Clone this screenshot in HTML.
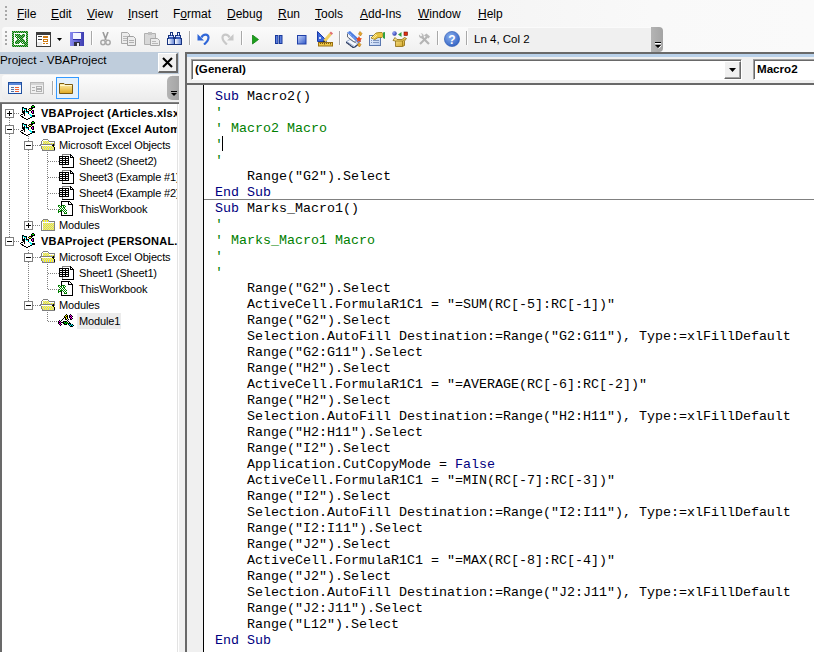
<!DOCTYPE html>
<html><head><meta charset="utf-8"><style>
*{margin:0;padding:0;box-sizing:border-box}
html,body{width:814px;height:652px;overflow:hidden;background:#f7f7f7;font-family:"Liberation Sans",sans-serif;position:relative}
.abs{position:absolute}
.mi{position:absolute;top:7px;font-size:12px;color:#000;line-height:14px;white-space:nowrap}
.mi u{text-decoration:underline;text-underline-offset:1px}
.sep{position:absolute;width:1px;height:14px;top:31px;background:#a8a8a8;box-shadow:1px 0 0 #fff}
.ico{position:absolute}
.tr{position:absolute;font-size:11px;white-space:nowrap;line-height:13px;color:#000;letter-spacing:-0.15px}
.tb{font-weight:bold;letter-spacing:0.25px}
.box{position:absolute;width:9px;height:9px;border:1px solid #808080;background:#fff}
.box:before{content:"";position:absolute;left:1px;top:3px;width:5px;height:1px;background:#000}
.box.plus:after{content:"";position:absolute;left:3px;top:1px;width:1px;height:5px;background:#000}
.dv{position:absolute;width:1px;background-image:linear-gradient(#808080 50%,transparent 50%);background-size:1px 2px}
.dh{position:absolute;height:1px;background-image:linear-gradient(90deg,#808080 50%,transparent 50%);background-size:2px 1px}
.combo{position:absolute;height:21px;background:#fff;border-top:1px solid #a0a0a0;border-left:1px solid #a0a0a0;border-bottom:1px solid #fff;border-right:1px solid #fff;box-shadow:inset 1px 1px 0 #696969}
.combo span{position:absolute;left:3px;top:2px;font-size:11.6px;font-weight:bold;white-space:nowrap;line-height:13px}
#lines{left:215px;top:89px;font-family:"Liberation Mono",monospace;font-size:13.333px;line-height:16px;white-space:pre;color:#000}
.k{color:#000080}
.c{color:#008000}
</style></head><body>
<svg width="0" height="0" style="position:absolute"><symbol id="i-proj" viewBox="0 0 16 16" shape-rendering="crispEdges"><rect x="12" y="0" width="2" height="1" fill="#000"/><rect x="11" y="1" width="1" height="1" fill="#000"/><rect x="12" y="1" width="2" height="1" fill="#00ff00"/><rect x="14" y="1" width="1" height="1" fill="#000"/><rect x="2" y="2" width="2" height="1" fill="#000"/><rect x="11" y="2" width="4" height="1" fill="#000"/><rect x="2" y="3" width="1" height="1" fill="#000"/><rect x="3" y="3" width="1" height="1" fill="#00ffff"/><rect x="4" y="3" width="3" height="1" fill="#000"/><rect x="9" y="3" width="4" height="1" fill="#000"/><rect x="2" y="4" width="1" height="1" fill="#000"/><rect x="3" y="4" width="1" height="1" fill="#fff"/><rect x="4" y="4" width="2" height="1" fill="#00ffff"/><rect x="6" y="4" width="1" height="1" fill="#000"/><rect x="8" y="4" width="1" height="1" fill="#000"/><rect x="9" y="4" width="2" height="1" fill="#ffff00"/><rect x="11" y="4" width="1" height="1" fill="#000"/><rect x="2" y="5" width="1" height="1" fill="#000"/><rect x="3" y="5" width="1" height="1" fill="#fff"/><rect x="4" y="5" width="1" height="1" fill="#000"/><rect x="5" y="5" width="1" height="1" fill="#fff"/><rect x="6" y="5" width="1" height="1" fill="#000"/><rect x="9" y="5" width="2" height="1" fill="#000"/><rect x="12" y="5" width="2" height="1" fill="#000"/><rect x="2" y="6" width="3" height="1" fill="#000"/><rect x="5" y="6" width="1" height="1" fill="#00ffff"/><rect x="6" y="6" width="3" height="1" fill="#000"/><rect x="11" y="6" width="1" height="1" fill="#000"/><rect x="12" y="6" width="1" height="1" fill="#ff00ff"/><rect x="13" y="6" width="1" height="1" fill="#000"/><rect x="2" y="7" width="3" height="1" fill="#000"/><rect x="5" y="7" width="1" height="1" fill="#fff"/><rect x="6" y="7" width="2" height="1" fill="#00ffff"/><rect x="8" y="7" width="1" height="1" fill="#000"/><rect x="11" y="7" width="1" height="1" fill="#000"/><rect x="12" y="7" width="1" height="1" fill="#ff00ff"/><rect x="13" y="7" width="1" height="1" fill="#000"/><rect x="3" y="8" width="2" height="1" fill="#000"/><rect x="5" y="8" width="3" height="1" fill="#fff"/><rect x="8" y="8" width="1" height="1" fill="#000"/><rect x="12" y="8" width="2" height="1" fill="#000"/><rect x="1" y="9" width="2" height="1" fill="#000"/><rect x="4" y="9" width="1" height="1" fill="#000"/><rect x="5" y="9" width="4" height="1" fill="#fff"/><rect x="9" y="9" width="2" height="1" fill="#00ffff"/><rect x="0" y="10" width="1" height="1" fill="#000"/><rect x="1" y="10" width="3" height="1" fill="#fff"/><rect x="4" y="10" width="1" height="1" fill="#000"/><rect x="5" y="10" width="5" height="1" fill="#fff"/><rect x="10" y="10" width="2" height="1" fill="#00ffff"/><rect x="12" y="10" width="3" height="1" fill="#000"/><rect x="1" y="11" width="2" height="1" fill="#000"/><rect x="3" y="11" width="8" height="1" fill="#fff"/><rect x="11" y="11" width="1" height="1" fill="#00ffff"/><rect x="12" y="11" width="3" height="1" fill="#000"/><rect x="2" y="12" width="2" height="1" fill="#000"/><rect x="4" y="12" width="6" height="1" fill="#fff"/><rect x="10" y="12" width="2" height="1" fill="#000"/><rect x="4" y="13" width="2" height="1" fill="#000"/><rect x="6" y="13" width="2" height="1" fill="#fff"/><rect x="8" y="13" width="2" height="1" fill="#000"/><rect x="6" y="14" width="2" height="1" fill="#000"/></symbol><symbol id="i-fopen" viewBox="0 0 16 16" shape-rendering="crispEdges"><rect x="3" y="2" width="5" height="1" fill="#808080"/><rect x="2" y="3" width="1" height="1" fill="#808080"/><rect x="3" y="3" width="5" height="1" fill="#fff"/><rect x="8" y="3" width="1" height="1" fill="#808080"/><rect x="1" y="4" width="1" height="1" fill="#808080"/><rect x="2" y="4" width="1" height="1" fill="#fff"/><rect x="3" y="4" width="1" height="1" fill="#ffff00"/><rect x="4" y="4" width="1" height="1" fill="#c8c8d8"/><rect x="5" y="4" width="1" height="1" fill="#ffff00"/><rect x="6" y="4" width="1" height="1" fill="#c8c8d8"/><rect x="7" y="4" width="1" height="1" fill="#ffff00"/><rect x="8" y="4" width="1" height="1" fill="#c8c8d8"/><rect x="9" y="4" width="6" height="1" fill="#808080"/><rect x="1" y="5" width="1" height="1" fill="#808080"/><rect x="2" y="5" width="1" height="1" fill="#fff"/><rect x="3" y="5" width="1" height="1" fill="#c8c8d8"/><rect x="4" y="5" width="1" height="1" fill="#ffff00"/><rect x="5" y="5" width="1" height="1" fill="#c8c8d8"/><rect x="6" y="5" width="1" height="1" fill="#ffff00"/><rect x="7" y="5" width="1" height="1" fill="#c8c8d8"/><rect x="8" y="5" width="1" height="1" fill="#ffff00"/><rect x="9" y="5" width="5" height="1" fill="#fff"/><rect x="14" y="5" width="1" height="1" fill="#808080"/><rect x="1" y="6" width="1" height="1" fill="#808080"/><rect x="2" y="6" width="1" height="1" fill="#fff"/><rect x="3" y="6" width="1" height="1" fill="#ffff00"/><rect x="4" y="6" width="1" height="1" fill="#c8c8d8"/><rect x="5" y="6" width="1" height="1" fill="#ffff00"/><rect x="6" y="6" width="1" height="1" fill="#c8c8d8"/><rect x="7" y="6" width="1" height="1" fill="#ffff00"/><rect x="8" y="6" width="1" height="1" fill="#c8c8d8"/><rect x="9" y="6" width="1" height="1" fill="#ffff00"/><rect x="10" y="6" width="1" height="1" fill="#c8c8d8"/><rect x="11" y="6" width="1" height="1" fill="#ffff00"/><rect x="12" y="6" width="1" height="1" fill="#c8c8d8"/><rect x="13" y="6" width="1" height="1" fill="#ffff00"/><rect x="14" y="6" width="1" height="1" fill="#808080"/><rect x="0" y="7" width="13" height="1" fill="#808080"/><rect x="13" y="7" width="1" height="1" fill="#000"/><rect x="14" y="7" width="1" height="1" fill="#808080"/><rect x="0" y="8" width="1" height="1" fill="#808080"/><rect x="1" y="8" width="11" height="1" fill="#fff"/><rect x="12" y="8" width="2" height="1" fill="#000"/><rect x="14" y="8" width="1" height="1" fill="#808080"/><rect x="1" y="9" width="1" height="1" fill="#808080"/><rect x="2" y="9" width="1" height="1" fill="#ffff00"/><rect x="3" y="9" width="1" height="1" fill="#c8c8d8"/><rect x="4" y="9" width="1" height="1" fill="#ffff00"/><rect x="5" y="9" width="1" height="1" fill="#c8c8d8"/><rect x="6" y="9" width="1" height="1" fill="#ffff00"/><rect x="7" y="9" width="1" height="1" fill="#c8c8d8"/><rect x="8" y="9" width="1" height="1" fill="#ffff00"/><rect x="9" y="9" width="1" height="1" fill="#c8c8d8"/><rect x="10" y="9" width="1" height="1" fill="#ffff00"/><rect x="11" y="9" width="1" height="1" fill="#c8c8d8"/><rect x="12" y="9" width="1" height="1" fill="#ffff00"/><rect x="13" y="9" width="1" height="1" fill="#000"/><rect x="1" y="10" width="1" height="1" fill="#808080"/><rect x="2" y="10" width="1" height="1" fill="#c8c8d8"/><rect x="3" y="10" width="1" height="1" fill="#ffff00"/><rect x="4" y="10" width="1" height="1" fill="#c8c8d8"/><rect x="5" y="10" width="1" height="1" fill="#ffff00"/><rect x="6" y="10" width="1" height="1" fill="#c8c8d8"/><rect x="7" y="10" width="1" height="1" fill="#ffff00"/><rect x="8" y="10" width="1" height="1" fill="#c8c8d8"/><rect x="9" y="10" width="1" height="1" fill="#ffff00"/><rect x="10" y="10" width="1" height="1" fill="#c8c8d8"/><rect x="11" y="10" width="1" height="1" fill="#ffff00"/><rect x="12" y="10" width="1" height="1" fill="#c8c8d8"/><rect x="13" y="10" width="1" height="1" fill="#ffff00"/><rect x="14" y="10" width="1" height="1" fill="#000"/><rect x="1" y="11" width="1" height="1" fill="#808080"/><rect x="2" y="11" width="1" height="1" fill="#ffff00"/><rect x="3" y="11" width="1" height="1" fill="#c8c8d8"/><rect x="4" y="11" width="1" height="1" fill="#ffff00"/><rect x="5" y="11" width="1" height="1" fill="#c8c8d8"/><rect x="6" y="11" width="1" height="1" fill="#ffff00"/><rect x="7" y="11" width="1" height="1" fill="#c8c8d8"/><rect x="8" y="11" width="1" height="1" fill="#ffff00"/><rect x="9" y="11" width="1" height="1" fill="#c8c8d8"/><rect x="10" y="11" width="1" height="1" fill="#ffff00"/><rect x="11" y="11" width="1" height="1" fill="#c8c8d8"/><rect x="12" y="11" width="1" height="1" fill="#ffff00"/><rect x="13" y="11" width="1" height="1" fill="#c8c8d8"/><rect x="14" y="11" width="1" height="1" fill="#000"/><rect x="2" y="12" width="1" height="1" fill="#808080"/><rect x="3" y="12" width="1" height="1" fill="#c8c8d8"/><rect x="4" y="12" width="1" height="1" fill="#ffff00"/><rect x="5" y="12" width="1" height="1" fill="#c8c8d8"/><rect x="6" y="12" width="1" height="1" fill="#ffff00"/><rect x="7" y="12" width="1" height="1" fill="#c8c8d8"/><rect x="8" y="12" width="1" height="1" fill="#ffff00"/><rect x="9" y="12" width="1" height="1" fill="#c8c8d8"/><rect x="10" y="12" width="1" height="1" fill="#ffff00"/><rect x="11" y="12" width="1" height="1" fill="#c8c8d8"/><rect x="12" y="12" width="1" height="1" fill="#ffff00"/><rect x="13" y="12" width="1" height="1" fill="#c8c8d8"/><rect x="14" y="12" width="1" height="1" fill="#000"/><rect x="2" y="13" width="13" height="1" fill="#808080"/></symbol><symbol id="i-fclosed" viewBox="0 0 16 16" shape-rendering="crispEdges"><rect x="3" y="2" width="5" height="1" fill="#808080"/><rect x="2" y="3" width="1" height="1" fill="#808080"/><rect x="3" y="3" width="1" height="1" fill="#ffff00"/><rect x="4" y="3" width="1" height="1" fill="#c8c8d8"/><rect x="5" y="3" width="1" height="1" fill="#ffff00"/><rect x="6" y="3" width="1" height="1" fill="#c8c8d8"/><rect x="7" y="3" width="1" height="1" fill="#ffff00"/><rect x="8" y="3" width="1" height="1" fill="#808080"/><rect x="1" y="4" width="1" height="1" fill="#808080"/><rect x="2" y="4" width="1" height="1" fill="#c8c8d8"/><rect x="3" y="4" width="1" height="1" fill="#ffff00"/><rect x="4" y="4" width="1" height="1" fill="#c8c8d8"/><rect x="5" y="4" width="1" height="1" fill="#ffff00"/><rect x="6" y="4" width="1" height="1" fill="#c8c8d8"/><rect x="7" y="4" width="1" height="1" fill="#ffff00"/><rect x="8" y="4" width="1" height="1" fill="#c8c8d8"/><rect x="9" y="4" width="6" height="1" fill="#808080"/><rect x="1" y="5" width="1" height="1" fill="#808080"/><rect x="2" y="5" width="12" height="1" fill="#fff"/><rect x="14" y="5" width="1" height="1" fill="#808080"/><rect x="1" y="6" width="1" height="1" fill="#808080"/><rect x="2" y="6" width="1" height="1" fill="#fff"/><rect x="3" y="6" width="1" height="1" fill="#ffff00"/><rect x="4" y="6" width="1" height="1" fill="#c8c8d8"/><rect x="5" y="6" width="1" height="1" fill="#ffff00"/><rect x="6" y="6" width="1" height="1" fill="#c8c8d8"/><rect x="7" y="6" width="1" height="1" fill="#ffff00"/><rect x="8" y="6" width="1" height="1" fill="#c8c8d8"/><rect x="9" y="6" width="1" height="1" fill="#ffff00"/><rect x="10" y="6" width="1" height="1" fill="#c8c8d8"/><rect x="11" y="6" width="1" height="1" fill="#ffff00"/><rect x="12" y="6" width="1" height="1" fill="#c8c8d8"/><rect x="13" y="6" width="1" height="1" fill="#ffff00"/><rect x="14" y="6" width="1" height="1" fill="#808080"/><rect x="1" y="7" width="1" height="1" fill="#808080"/><rect x="2" y="7" width="1" height="1" fill="#fff"/><rect x="3" y="7" width="1" height="1" fill="#c8c8d8"/><rect x="4" y="7" width="1" height="1" fill="#ffff00"/><rect x="5" y="7" width="1" height="1" fill="#c8c8d8"/><rect x="6" y="7" width="1" height="1" fill="#ffff00"/><rect x="7" y="7" width="1" height="1" fill="#c8c8d8"/><rect x="8" y="7" width="1" height="1" fill="#ffff00"/><rect x="9" y="7" width="1" height="1" fill="#c8c8d8"/><rect x="10" y="7" width="1" height="1" fill="#ffff00"/><rect x="11" y="7" width="1" height="1" fill="#c8c8d8"/><rect x="12" y="7" width="1" height="1" fill="#ffff00"/><rect x="13" y="7" width="1" height="1" fill="#c8c8d8"/><rect x="14" y="7" width="1" height="1" fill="#808080"/><rect x="1" y="8" width="1" height="1" fill="#808080"/><rect x="2" y="8" width="1" height="1" fill="#fff"/><rect x="3" y="8" width="1" height="1" fill="#ffff00"/><rect x="4" y="8" width="1" height="1" fill="#c8c8d8"/><rect x="5" y="8" width="1" height="1" fill="#ffff00"/><rect x="6" y="8" width="1" height="1" fill="#c8c8d8"/><rect x="7" y="8" width="1" height="1" fill="#ffff00"/><rect x="8" y="8" width="1" height="1" fill="#c8c8d8"/><rect x="9" y="8" width="1" height="1" fill="#ffff00"/><rect x="10" y="8" width="1" height="1" fill="#c8c8d8"/><rect x="11" y="8" width="1" height="1" fill="#ffff00"/><rect x="12" y="8" width="1" height="1" fill="#c8c8d8"/><rect x="13" y="8" width="1" height="1" fill="#ffff00"/><rect x="14" y="8" width="1" height="1" fill="#808080"/><rect x="1" y="9" width="1" height="1" fill="#808080"/><rect x="2" y="9" width="1" height="1" fill="#fff"/><rect x="3" y="9" width="1" height="1" fill="#c8c8d8"/><rect x="4" y="9" width="1" height="1" fill="#ffff00"/><rect x="5" y="9" width="1" height="1" fill="#c8c8d8"/><rect x="6" y="9" width="1" height="1" fill="#ffff00"/><rect x="7" y="9" width="1" height="1" fill="#c8c8d8"/><rect x="8" y="9" width="1" height="1" fill="#ffff00"/><rect x="9" y="9" width="1" height="1" fill="#c8c8d8"/><rect x="10" y="9" width="1" height="1" fill="#ffff00"/><rect x="11" y="9" width="1" height="1" fill="#c8c8d8"/><rect x="12" y="9" width="1" height="1" fill="#ffff00"/><rect x="13" y="9" width="1" height="1" fill="#c8c8d8"/><rect x="14" y="9" width="1" height="1" fill="#808080"/><rect x="1" y="10" width="1" height="1" fill="#808080"/><rect x="2" y="10" width="1" height="1" fill="#fff"/><rect x="3" y="10" width="1" height="1" fill="#ffff00"/><rect x="4" y="10" width="1" height="1" fill="#c8c8d8"/><rect x="5" y="10" width="1" height="1" fill="#ffff00"/><rect x="6" y="10" width="1" height="1" fill="#c8c8d8"/><rect x="7" y="10" width="1" height="1" fill="#ffff00"/><rect x="8" y="10" width="1" height="1" fill="#c8c8d8"/><rect x="9" y="10" width="1" height="1" fill="#ffff00"/><rect x="10" y="10" width="1" height="1" fill="#c8c8d8"/><rect x="11" y="10" width="1" height="1" fill="#ffff00"/><rect x="12" y="10" width="1" height="1" fill="#c8c8d8"/><rect x="13" y="10" width="1" height="1" fill="#ffff00"/><rect x="14" y="10" width="1" height="1" fill="#808080"/><rect x="1" y="11" width="1" height="1" fill="#808080"/><rect x="2" y="11" width="1" height="1" fill="#fff"/><rect x="3" y="11" width="1" height="1" fill="#c8c8d8"/><rect x="4" y="11" width="1" height="1" fill="#ffff00"/><rect x="5" y="11" width="1" height="1" fill="#c8c8d8"/><rect x="6" y="11" width="1" height="1" fill="#ffff00"/><rect x="7" y="11" width="1" height="1" fill="#c8c8d8"/><rect x="8" y="11" width="1" height="1" fill="#ffff00"/><rect x="9" y="11" width="1" height="1" fill="#c8c8d8"/><rect x="10" y="11" width="1" height="1" fill="#ffff00"/><rect x="11" y="11" width="1" height="1" fill="#c8c8d8"/><rect x="12" y="11" width="1" height="1" fill="#ffff00"/><rect x="13" y="11" width="1" height="1" fill="#c8c8d8"/><rect x="14" y="11" width="1" height="1" fill="#808080"/><rect x="1" y="12" width="1" height="1" fill="#808080"/><rect x="2" y="12" width="1" height="1" fill="#fff"/><rect x="3" y="12" width="1" height="1" fill="#ffff00"/><rect x="4" y="12" width="1" height="1" fill="#c8c8d8"/><rect x="5" y="12" width="1" height="1" fill="#ffff00"/><rect x="6" y="12" width="1" height="1" fill="#c8c8d8"/><rect x="7" y="12" width="1" height="1" fill="#ffff00"/><rect x="8" y="12" width="1" height="1" fill="#c8c8d8"/><rect x="9" y="12" width="1" height="1" fill="#ffff00"/><rect x="10" y="12" width="1" height="1" fill="#c8c8d8"/><rect x="11" y="12" width="1" height="1" fill="#ffff00"/><rect x="12" y="12" width="1" height="1" fill="#c8c8d8"/><rect x="13" y="12" width="1" height="1" fill="#ffff00"/><rect x="14" y="12" width="1" height="1" fill="#808080"/><rect x="1" y="13" width="14" height="1" fill="#808080"/></symbol><symbol id="i-sheet" viewBox="0 0 16 16" shape-rendering="crispEdges"><rect x="3" y="1" width="8" height="1" fill="#808080"/><rect x="11" y="1" width="1" height="1" fill="#000"/><rect x="3" y="2" width="1" height="1" fill="#808080"/><rect x="4" y="2" width="7" height="1" fill="#fff"/><rect x="11" y="2" width="2" height="1" fill="#000"/><rect x="0" y="3" width="10" height="1" fill="#000"/><rect x="10" y="3" width="1" height="1" fill="#fff"/><rect x="11" y="3" width="1" height="1" fill="#000"/><rect x="12" y="3" width="1" height="1" fill="#fff"/><rect x="13" y="3" width="1" height="1" fill="#000"/><rect x="0" y="4" width="1" height="1" fill="#000"/><rect x="1" y="4" width="2" height="1" fill="#fff"/><rect x="3" y="4" width="1" height="1" fill="#000"/><rect x="4" y="4" width="2" height="1" fill="#fff"/><rect x="6" y="4" width="1" height="1" fill="#000"/><rect x="7" y="4" width="2" height="1" fill="#fff"/><rect x="9" y="4" width="1" height="1" fill="#000"/><rect x="10" y="4" width="1" height="1" fill="#fff"/><rect x="11" y="4" width="4" height="1" fill="#000"/><rect x="0" y="5" width="10" height="1" fill="#000"/><rect x="10" y="5" width="4" height="1" fill="#fff"/><rect x="14" y="5" width="1" height="1" fill="#000"/><rect x="0" y="6" width="1" height="1" fill="#000"/><rect x="1" y="6" width="2" height="1" fill="#fff"/><rect x="3" y="6" width="1" height="1" fill="#000"/><rect x="4" y="6" width="2" height="1" fill="#fff"/><rect x="6" y="6" width="1" height="1" fill="#000"/><rect x="7" y="6" width="2" height="1" fill="#fff"/><rect x="9" y="6" width="1" height="1" fill="#000"/><rect x="10" y="6" width="4" height="1" fill="#fff"/><rect x="14" y="6" width="1" height="1" fill="#000"/><rect x="0" y="7" width="10" height="1" fill="#000"/><rect x="10" y="7" width="4" height="1" fill="#fff"/><rect x="14" y="7" width="1" height="1" fill="#000"/><rect x="0" y="8" width="1" height="1" fill="#000"/><rect x="1" y="8" width="2" height="1" fill="#fff"/><rect x="3" y="8" width="1" height="1" fill="#000"/><rect x="4" y="8" width="2" height="1" fill="#fff"/><rect x="6" y="8" width="1" height="1" fill="#000"/><rect x="7" y="8" width="2" height="1" fill="#fff"/><rect x="9" y="8" width="1" height="1" fill="#000"/><rect x="10" y="8" width="4" height="1" fill="#fff"/><rect x="14" y="8" width="1" height="1" fill="#000"/><rect x="0" y="9" width="10" height="1" fill="#000"/><rect x="10" y="9" width="4" height="1" fill="#fff"/><rect x="14" y="9" width="1" height="1" fill="#000"/><rect x="0" y="10" width="1" height="1" fill="#000"/><rect x="1" y="10" width="2" height="1" fill="#fff"/><rect x="3" y="10" width="1" height="1" fill="#000"/><rect x="4" y="10" width="2" height="1" fill="#fff"/><rect x="6" y="10" width="1" height="1" fill="#000"/><rect x="7" y="10" width="2" height="1" fill="#fff"/><rect x="9" y="10" width="1" height="1" fill="#000"/><rect x="10" y="10" width="4" height="1" fill="#fff"/><rect x="14" y="10" width="1" height="1" fill="#000"/><rect x="0" y="11" width="10" height="1" fill="#000"/><rect x="10" y="11" width="4" height="1" fill="#fff"/><rect x="14" y="11" width="1" height="1" fill="#000"/><rect x="3" y="12" width="1" height="1" fill="#808080"/><rect x="4" y="12" width="10" height="1" fill="#fff"/><rect x="14" y="12" width="1" height="1" fill="#000"/><rect x="3" y="13" width="1" height="1" fill="#808080"/><rect x="4" y="13" width="10" height="1" fill="#fff"/><rect x="14" y="13" width="1" height="1" fill="#000"/><rect x="3" y="14" width="12" height="1" fill="#000"/></symbol><symbol id="i-wb" viewBox="0 0 16 16" shape-rendering="crispEdges"><rect x="3" y="0" width="9" height="1" fill="#000"/><rect x="3" y="1" width="1" height="1" fill="#000"/><rect x="4" y="1" width="6" height="1" fill="#fff"/><rect x="10" y="1" width="1" height="1" fill="#000"/><rect x="11" y="1" width="1" height="1" fill="#fff"/><rect x="12" y="1" width="1" height="1" fill="#000"/><rect x="3" y="2" width="1" height="1" fill="#000"/><rect x="4" y="2" width="6" height="1" fill="#fff"/><rect x="10" y="2" width="1" height="1" fill="#000"/><rect x="11" y="2" width="2" height="1" fill="#fff"/><rect x="13" y="2" width="1" height="1" fill="#000"/><rect x="3" y="3" width="1" height="1" fill="#000"/><rect x="4" y="3" width="6" height="1" fill="#fff"/><rect x="10" y="3" width="5" height="1" fill="#000"/><rect x="0" y="4" width="2" height="1" fill="#008000"/><rect x="3" y="4" width="1" height="1" fill="#000"/><rect x="4" y="4" width="3" height="1" fill="#008000"/><rect x="9" y="4" width="5" height="1" fill="#fff"/><rect x="14" y="4" width="1" height="1" fill="#000"/><rect x="0" y="5" width="1" height="1" fill="#008000"/><rect x="1" y="5" width="1" height="1" fill="#fff"/><rect x="2" y="5" width="2" height="1" fill="#008000"/><rect x="4" y="5" width="1" height="1" fill="#fff"/><rect x="5" y="5" width="1" height="1" fill="#008000"/><rect x="6" y="5" width="1" height="1" fill="#fff"/><rect x="7" y="5" width="1" height="1" fill="#008000"/><rect x="9" y="5" width="5" height="1" fill="#fff"/><rect x="14" y="5" width="1" height="1" fill="#000"/><rect x="1" y="6" width="1" height="1" fill="#008000"/><rect x="2" y="6" width="1" height="1" fill="#fff"/><rect x="3" y="6" width="1" height="1" fill="#008000"/><rect x="4" y="6" width="1" height="1" fill="#fff"/><rect x="5" y="6" width="2" height="1" fill="#008000"/><rect x="9" y="6" width="5" height="1" fill="#fff"/><rect x="14" y="6" width="1" height="1" fill="#000"/><rect x="2" y="7" width="1" height="1" fill="#008000"/><rect x="3" y="7" width="1" height="1" fill="#fff"/><rect x="4" y="7" width="1" height="1" fill="#008000"/><rect x="5" y="7" width="1" height="1" fill="#fff"/><rect x="6" y="7" width="1" height="1" fill="#008000"/><rect x="9" y="7" width="5" height="1" fill="#fff"/><rect x="14" y="7" width="1" height="1" fill="#000"/><rect x="1" y="8" width="1" height="1" fill="#008000"/><rect x="2" y="8" width="1" height="1" fill="#fff"/><rect x="3" y="8" width="1" height="1" fill="#008000"/><rect x="4" y="8" width="1" height="1" fill="#fff"/><rect x="5" y="8" width="1" height="1" fill="#008000"/><rect x="6" y="8" width="1" height="1" fill="#fff"/><rect x="7" y="8" width="1" height="1" fill="#008000"/><rect x="9" y="8" width="5" height="1" fill="#fff"/><rect x="14" y="8" width="1" height="1" fill="#000"/><rect x="0" y="9" width="1" height="1" fill="#008000"/><rect x="1" y="9" width="1" height="1" fill="#fff"/><rect x="2" y="9" width="3" height="1" fill="#008000"/><rect x="5" y="9" width="1" height="1" fill="#fff"/><rect x="6" y="9" width="1" height="1" fill="#008000"/><rect x="7" y="9" width="1" height="1" fill="#fff"/><rect x="8" y="9" width="1" height="1" fill="#008000"/><rect x="9" y="9" width="5" height="1" fill="#fff"/><rect x="14" y="9" width="1" height="1" fill="#000"/><rect x="0" y="10" width="3" height="1" fill="#008000"/><rect x="3" y="10" width="1" height="1" fill="#000"/><rect x="5" y="10" width="1" height="1" fill="#008000"/><rect x="6" y="10" width="1" height="1" fill="#fff"/><rect x="7" y="10" width="1" height="1" fill="#008000"/><rect x="8" y="10" width="6" height="1" fill="#fff"/><rect x="14" y="10" width="1" height="1" fill="#000"/><rect x="0" y="11" width="1" height="1" fill="#008000"/><rect x="3" y="11" width="1" height="1" fill="#000"/><rect x="6" y="11" width="1" height="1" fill="#008000"/><rect x="7" y="11" width="1" height="1" fill="#fff"/><rect x="8" y="11" width="1" height="1" fill="#008000"/><rect x="9" y="11" width="5" height="1" fill="#fff"/><rect x="14" y="11" width="1" height="1" fill="#000"/><rect x="3" y="12" width="1" height="1" fill="#000"/><rect x="6" y="12" width="3" height="1" fill="#008000"/><rect x="9" y="12" width="5" height="1" fill="#fff"/><rect x="14" y="12" width="1" height="1" fill="#000"/><rect x="3" y="13" width="1" height="1" fill="#000"/><rect x="4" y="13" width="10" height="1" fill="#fff"/><rect x="14" y="13" width="1" height="1" fill="#000"/><rect x="3" y="14" width="12" height="1" fill="#000"/></symbol><symbol id="i-mod" viewBox="0 0 18 16" shape-rendering="crispEdges"><rect x="10" y="3" width="1" height="1" fill="#000"/><rect x="14" y="3" width="1" height="1" fill="#000"/><rect x="9" y="4" width="1" height="1" fill="#000"/><rect x="10" y="4" width="1" height="1" fill="#ffff00"/><rect x="11" y="4" width="1" height="1" fill="#000"/><rect x="13" y="4" width="1" height="1" fill="#000"/><rect x="14" y="4" width="1" height="1" fill="#ff00ff"/><rect x="15" y="4" width="1" height="1" fill="#000"/><rect x="8" y="5" width="1" height="1" fill="#000"/><rect x="9" y="5" width="1" height="1" fill="#ffff00"/><rect x="10" y="5" width="2" height="1" fill="#000"/><rect x="13" y="5" width="2" height="1" fill="#000"/><rect x="15" y="5" width="1" height="1" fill="#ff00ff"/><rect x="16" y="5" width="1" height="1" fill="#000"/><rect x="8" y="6" width="2" height="1" fill="#000"/><rect x="10" y="6" width="1" height="1" fill="#ffff00"/><rect x="11" y="6" width="1" height="1" fill="#000"/><rect x="13" y="6" width="1" height="1" fill="#000"/><rect x="14" y="6" width="1" height="1" fill="#ff00ff"/><rect x="15" y="6" width="1" height="1" fill="#000"/><rect x="7" y="7" width="1" height="1" fill="#000"/><rect x="9" y="7" width="1" height="1" fill="#000"/><rect x="10" y="7" width="1" height="1" fill="#ffff00"/><rect x="11" y="7" width="1" height="1" fill="#000"/><rect x="14" y="7" width="1" height="1" fill="#000"/><rect x="15" y="7" width="1" height="1" fill="#ff00ff"/><rect x="16" y="7" width="1" height="1" fill="#000"/><rect x="6" y="8" width="1" height="1" fill="#000"/><rect x="9" y="8" width="2" height="1" fill="#000"/><rect x="12" y="8" width="1" height="1" fill="#000"/><rect x="14" y="8" width="2" height="1" fill="#000"/><rect x="3" y="9" width="1" height="1" fill="#000"/><rect x="5" y="9" width="1" height="1" fill="#000"/><rect x="11" y="9" width="1" height="1" fill="#000"/><rect x="2" y="10" width="1" height="1" fill="#000"/><rect x="3" y="10" width="1" height="1" fill="#ff00ff"/><rect x="4" y="10" width="1" height="1" fill="#000"/><rect x="7" y="10" width="4" height="1" fill="#000"/><rect x="12" y="10" width="1" height="1" fill="#000"/><rect x="2" y="11" width="2" height="1" fill="#000"/><rect x="4" y="11" width="1" height="1" fill="#ff00ff"/><rect x="5" y="11" width="3" height="1" fill="#000"/><rect x="8" y="11" width="1" height="1" fill="#00ff00"/><rect x="9" y="11" width="1" height="1" fill="#000"/><rect x="10" y="11" width="1" height="1" fill="#00ff00"/><rect x="11" y="11" width="1" height="1" fill="#000"/><rect x="13" y="11" width="1" height="1" fill="#000"/><rect x="2" y="12" width="1" height="1" fill="#000"/><rect x="3" y="12" width="1" height="1" fill="#ff00ff"/><rect x="4" y="12" width="1" height="1" fill="#000"/><rect x="7" y="12" width="2" height="1" fill="#000"/><rect x="9" y="12" width="1" height="1" fill="#00ff00"/><rect x="10" y="12" width="1" height="1" fill="#000"/><rect x="11" y="12" width="1" height="1" fill="#00ff00"/><rect x="12" y="12" width="3" height="1" fill="#000"/><rect x="3" y="13" width="1" height="1" fill="#000"/><rect x="4" y="13" width="1" height="1" fill="#ff00ff"/><rect x="5" y="13" width="1" height="1" fill="#000"/><rect x="8" y="13" width="3" height="1" fill="#000"/><rect x="12" y="13" width="1" height="1" fill="#000"/><rect x="13" y="13" width="1" height="1" fill="#00ffff"/><rect x="14" y="13" width="1" height="1" fill="#000"/><rect x="15" y="13" width="1" height="1" fill="#00ffff"/><rect x="16" y="13" width="1" height="1" fill="#000"/><rect x="4" y="14" width="1" height="1" fill="#000"/><rect x="13" y="14" width="1" height="1" fill="#000"/><rect x="14" y="14" width="1" height="1" fill="#00ffff"/><rect x="15" y="14" width="1" height="1" fill="#000"/><rect x="16" y="14" width="1" height="1" fill="#00ffff"/><rect x="17" y="14" width="1" height="1" fill="#000"/><rect x="14" y="15" width="3" height="1" fill="#000"/></symbol></svg>
<div class="abs" style="left:0;top:0;width:814px;height:52px;background:linear-gradient(90deg,#efefef 0%,#f2f2f2 45%,#f9f9f9 80%,#fafafa 100%)"></div>
<div class="abs" style="left:5px;top:6px;width:2px;height:15px;background-image:linear-gradient(#a8a8a8 50%,transparent 50%);background-size:2px 4px"></div>
<div class="mi" style="left:17px"><u>F</u>ile</div>
<div class="mi" style="left:51px"><u>E</u>dit</div>
<div class="mi" style="left:87px"><u>V</u>iew</div>
<div class="mi" style="left:128px"><u>I</u>nsert</div>
<div class="mi" style="left:173px">F<u>o</u>rmat</div>
<div class="mi" style="left:227px"><u>D</u>ebug</div>
<div class="mi" style="left:278px"><u>R</u>un</div>
<div class="mi" style="left:315px"><u>T</u>ools</div>
<div class="mi" style="left:360px"><u>A</u>dd-Ins</div>
<div class="mi" style="left:418px"><u>W</u>indow</div>
<div class="mi" style="left:478px"><u>H</u>elp</div>
<div class="abs" style="left:2px;top:27px;width:650px;height:25px;background:linear-gradient(#fbfbfb,#f0f0f0);border-radius:3px 0 0 3px"></div>
<div class="abs" style="left:651px;top:27px;width:12px;height:25px;background:linear-gradient(90deg,#b4b4b4,#a4a4a4);border-radius:0 4px 4px 0"></div>
<div class="abs" style="left:655px;top:42px;width:6px;height:1px;background:#000;box-shadow:0 1px 0 #fff"></div>
<svg class="abs" style="left:655px;top:45px" width="7" height="4"><path d="M0,0 H6 L3,3z" fill="#000"/><path d="M3.5,3.5 L6.5,0.5" stroke="#fff"/></svg>
<div class="abs" style="left:5px;top:31px;width:2px;height:15px;background-image:linear-gradient(#a8a8a8 50%,transparent 50%);background-size:2px 4px"></div>
<div class="sep" style="left:91px"></div>
<div class="sep" style="left:189px"></div>
<div class="sep" style="left:241px"></div>
<div class="sep" style="left:339px"></div>
<div class="sep" style="left:437px"></div>
<div class="sep" style="left:466px"></div>
<div class="abs" style="left:468px;top:28px;width:183px;height:23px;background:#f0f0f0"></div>
<div class="abs" style="left:474px;top:32px;font-size:11.5px;line-height:14px;white-space:nowrap">Ln 4, Col 2</div>
<svg class="abs" style="left:12px;top:31px" width="16" height="16" viewBox="0 0 16 16" shape-rendering="crispEdges"><defs><pattern id="xc" width="2" height="2" patternUnits="userSpaceOnUse"><rect width="2" height="2" fill="#007a00"/><rect x="1" y="0" width="1" height="1" fill="#78b878"/><rect x="0" y="1" width="1" height="1" fill="#78b878"/></pattern></defs><rect x="0" y="0" width="16" height="16" fill="url(#xc)"/><rect x="2" y="2" width="12" height="12" fill="#fff"/><path d="M3,3 H8 L13,10 V13 H10 L3,6z" fill="url(#xc)"/><path d="M10,3 H13 V5 L7,13 H3 V11z" fill="url(#xc)"/><path d="M4.5,5.5 L11.5,12.5" stroke="#fff" stroke-width="1" stroke-dasharray="1 1"/><rect x="12" y="11" width="2" height="3" fill="url(#xc)"/></svg>
<svg class="abs" style="left:36px;top:32px" width="15" height="15" viewBox="0 0 15 15" shape-rendering="crispEdges"><rect x="0" y="0" width="15" height="15" fill="#3c3c3c"/><rect x="1" y="3" width="13" height="11" fill="#fff"/><rect x="1" y="10" width="5" height="4" fill="#ececec"/><rect x="2" y="4" width="4" height="1" fill="#444"/><rect x="2" y="7" width="4" height="1" fill="#444"/><rect x="7" y="4" width="5" height="2" fill="#d07a10"/><rect x="7" y="7" width="5" height="3" fill="#d07a10"/><rect x="8" y="8" width="3" height="1" fill="#fff"/><rect x="7" y="11" width="2" height="1" fill="#d07a10"/><rect x="10" y="11" width="2" height="1" fill="#d07a10"/></svg>
<svg class="abs" style="left:57px;top:38px" width="5" height="3" viewBox="0 0 5 3" ><path d="M0,0 H5 L2.5,3z" fill="#000"/></svg>
<svg class="abs" style="left:70px;top:32px" width="15" height="14" viewBox="0 0 15 14" shape-rendering="crispEdges"><defs><linearGradient id="sv" x1="0" x2="1"><stop offset="0" stop-color="#8a8cf0"/><stop offset="1" stop-color="#3c3cb0"/></linearGradient></defs><rect x="0" y="0" width="14" height="14" fill="url(#sv)"/><rect x="3" y="1" width="8" height="6" fill="#f4f6ff"/><rect x="3" y="7" width="8" height="1" fill="#2c2ca0"/><rect x="4" y="10" width="6" height="4" fill="#303040"/><rect x="7" y="11" width="2" height="3" fill="#e8e8f8"/></svg>
<svg class="abs" style="left:100px;top:32px" width="11" height="14" viewBox="0 0 11 14" ><path d="M3,0 L6,8 M8,0 L5,8" stroke="#9a9a9a" stroke-width="1.6" fill="none"/><circle cx="3" cy="10.5" r="2.2" stroke="#a8a8a8" stroke-width="1.5" fill="none"/><circle cx="8" cy="10.5" r="2.2" stroke="#a8a8a8" stroke-width="1.5" fill="none"/></svg>
<svg class="abs" style="left:121px;top:32px" width="16" height="14" viewBox="0 0 16 14" ><path d="M0.5,0.5 H6.5 L8.5,2.5 V11.5 H0.5z" fill="#ececec" stroke="#a8a8a8"/><path d="M2,4.5 H6 M2,6.5 H6 M2,8.5 H6" stroke="#b8b8b8"/><path d="M6.5,4.5 H12.5 L14.5,6.5 V13.5 H6.5z" fill="#ececec" stroke="#a0a0a0"/><path d="M8,8.5 H13 M8,10.5 H13" stroke="#b0b0b0"/></svg>
<svg class="abs" style="left:144px;top:32px" width="17" height="14" viewBox="0 0 17 14" ><path d="M0.5,1.5 H11.5 V12.5 H0.5z" fill="#d8d8d8" stroke="#b0b0b0"/><rect x="4" y="0" width="4" height="3" fill="#c0c0c0"/><path d="M6.5,6.5 H13.5 L15.5,8.5 V13.5 H6.5z" fill="#ececec" stroke="#a8a8a8"/><path d="M8,9.5 H12 M8,11.5 H14" stroke="#b8b8b8"/></svg>
<svg class="abs" style="left:167px;top:32px" width="16" height="13" viewBox="0 0 16 13" shape-rendering="crispEdges"><defs><linearGradient id="bn" x1="0" x2="1"><stop offset="0" stop-color="#ffffff"/><stop offset="1" stop-color="#6a8ad8"/></linearGradient></defs><path d="M3.5,0.5 H5.5 V3.5 H6.5 V6.5 H7.5 V12.5 H0.5 V6.5 H1.5 V3.5 H3.5z" fill="#3a5cb8" stroke="#17337f"/><path d="M10.5,0.5 H12.5 V3.5 H13.5 V6.5 H14.5 V12.5 H7.5 V6.5 H8.5 V3.5 H10.5z" fill="#3a5cb8" stroke="#17337f"/><rect x="1" y="7" width="6" height="5" fill="url(#bn)"/><rect x="8" y="7" width="6" height="5" fill="url(#bn)"/><rect x="4" y="1" width="1" height="2" fill="#fff"/><rect x="11" y="1" width="1" height="2" fill="#fff"/><path d="M2,4.5 H6 M9,4.5 H13" stroke="#c8d8ff"/><rect x="6" y="5" width="3" height="2" fill="#17337f"/></svg>
<svg class="abs" style="left:197px;top:32px" width="14" height="13" viewBox="0 0 14 13" ><path d="M4.5,5.5 C6,2 11.5,1.5 11.5,5.5 C11.5,8.5 9.5,10.5 7,12.5" stroke="#2f66d8" stroke-width="2.2" fill="none"/><path d="M0.5,2 V8.5 H7z" fill="#2f66d8"/></svg>
<svg class="abs" style="left:220px;top:32px" width="14" height="13" viewBox="0 0 14 13" ><path d="M9.5,5.5 C8,2 2.5,1.5 2.5,5.5 C2.5,8.5 4.5,10.5 7,12.5" stroke="#c8c8c8" stroke-width="2.2" fill="none"/><path d="M13.5,2 V8.5 H7z" fill="#c8c8c8"/></svg>
<svg class="abs" style="left:252px;top:35px" width="7" height="10" viewBox="0 0 7 10" ><path d="M0.5,0 L6.5,4.5 L0.5,9z" fill="#1ca01c" stroke="#138013" stroke-width="0.8"/></svg>
<svg class="abs" style="left:275px;top:35px" width="8" height="9" viewBox="0 0 8 9" ><rect x="0.5" y="0.5" width="2.5" height="8" fill="#5a7ee0" stroke="#1a3a9a"/><rect x="4.5" y="0.5" width="2.5" height="8" fill="#5a7ee0" stroke="#1a3a9a"/></svg>
<svg class="abs" style="left:297px;top:35px" width="10" height="10" viewBox="0 0 10 10" ><defs><linearGradient id="st" x1="0" y1="0" x2="1" y2="1"><stop offset="0" stop-color="#c8d6fa"/><stop offset="1" stop-color="#3058c8"/></linearGradient></defs><rect x="0.5" y="0.5" width="8.5" height="8.5" fill="url(#st)" stroke="#2040a8"/></svg>
<svg class="abs" style="left:317px;top:31px" width="17" height="16" viewBox="0 0 17 16" ><path d="M0.5,0.5 L9.5,9.5 V10.5 H0.5z" fill="#3a66d8" stroke="#1a3aa8"/><circle cx="3" cy="7" r="1" fill="#fff"/><path d="M7.5,10 L13.5,3" stroke="#f0d060" stroke-width="3"/><path d="M6.5,11 L7.5,10" stroke="#303030" stroke-width="2"/><path d="M13.5,3 L15,1.5" stroke="#e07070" stroke-width="3"/><rect x="1.5" y="11.5" width="14" height="3.5" fill="#f0c848" stroke="#9a7010"/><path d="M3.5,12 V13 M5.5,12 V13 M7.5,12 V13.5 M9.5,12 V13 M11.5,12 V13 M13.5,12 V13.5" stroke="#7a5a10"/></svg>
<svg class="abs" style="left:346px;top:31px" width="17" height="17" viewBox="0 0 17 17" ><path d="M0.5,10.5 L4,8.5 L12,13 L8.5,15.5z" fill="#f4f8ff" stroke="#8aa0c8" stroke-width="0.8"/><path d="M0,11 L1,12 L2,12.5 L3,13.5 L4,14 L5,15 L6,15.5 L7,16.5 L9,16 L12,13.5" stroke="#2a3a60" stroke-width="1.2" fill="none"/><path d="M1.5,2.5 V6 L8,11 L10,11" stroke="#606878" stroke-width="1" fill="none"/><path d="M1,1.5 L4,0 L15,10 L12.5,12.5z" fill="#4a7ae0"/><path d="M2.5,1.5 L13.5,11.5" stroke="#a8c8ff" stroke-width="1" stroke-dasharray="1.2 0.8"/><path d="M13,5 L14,7 L16,7.5 L14.5,9 L15,11 L13,10 L11,11 L11.5,9 L10,7.5 L12,7z" fill="#e84818"/><path d="M14,0.5 L16,2.5 L14.5,5 L12.5,3z" fill="#e8a828" stroke="#b07010" stroke-width="0.6"/><path d="M13,11.5 L15,13.5 L13.5,16 L11.5,14z" fill="#e8a828" stroke="#b07010" stroke-width="0.6"/></svg>
<svg class="abs" style="left:369px;top:32px" width="17" height="15" viewBox="0 0 17 15" ><defs><linearGradient id="pf" x1="0" y1="0" x2="1" y2="1"><stop offset="0" stop-color="#f4f8ff"/><stop offset="1" stop-color="#b8cdf0"/></linearGradient></defs><rect x="0.5" y="3.5" width="11" height="10" fill="url(#pf)" stroke="#5a78b0"/><path d="M2,8.5 H3 M4,8.5 H10 M2,10.5 H3 M4,10.5 H10" stroke="#8096c0"/><path d="M2,6 L7,1 L10,0.5 H13 C14.5,1.5 14.5,4.5 13,5.5 H9 L6,7.5z" fill="#e8c440" stroke="#9a7a10" stroke-width="0.8"/><path d="M3,6 L7,2 M4.5,6.5 L8,3" stroke="#fff4b0" stroke-width="0.8"/><path d="M14,0.5 L16,0 V7 L14,6z" fill="#30a040"/></svg>
<svg class="abs" style="left:392px;top:31px" width="17" height="16" viewBox="0 0 17 16" ><defs><radialGradient id="ob" cx="0.35" cy="0.35" r="0.7"><stop offset="0" stop-color="#9aa8ff"/><stop offset="1" stop-color="#2030a0"/></radialGradient><linearGradient id="bx" x1="0" y1="0" x2="1" y2="1"><stop offset="0" stop-color="#fff0a0"/><stop offset="1" stop-color="#d0a020"/></linearGradient></defs><circle cx="2.5" cy="2.5" r="2.2" fill="url(#ob)"/><path d="M6,3.5 L9.5,1 V6z" fill="#30a040"/><rect x="12" y="1" width="3.5" height="3.5" fill="#e03010" stroke="#701008" stroke-width="0.6"/><path d="M1,9.5 L3,6.5 L5,8.5 H10 L12.5,6.5 L14.5,7.5 L12.5,10 V14.5 L10.5,15.5 H3.5 V10z" fill="url(#bx)" stroke="#8a6a10" stroke-width="0.8"/><path d="M3.5,10 H10.5 V15.5 M10.5,10 L12.5,8.5" stroke="#9a7a10" stroke-width="0.8" fill="none"/></svg>
<svg class="abs" style="left:418px;top:33px" width="13" height="12" viewBox="0 0 13 12" ><path d="M2,11 L9,4" stroke="#b4b4b4" stroke-width="2.2"/><path d="M6,2.5 L8.5,0.5 L12,3.5 L10.5,5.5z" fill="#b8b8b8"/><path d="M11,11 L4.5,4.5" stroke="#b4b4b4" stroke-width="2.2"/><path d="M5.5,5.5 C2,6 0.5,3.5 1,1.5 L3,3.5 L4.5,2 L2.5,0.5 C5,0 6.5,2 5.5,5.5z" fill="#b8b8b8"/></svg>
<svg class="abs" style="left:444px;top:31px" width="16" height="16" viewBox="0 0 16 16" ><defs><radialGradient id="hp" cx="0.4" cy="0.35" r="0.7"><stop offset="0" stop-color="#8ab0f0"/><stop offset="1" stop-color="#3060c0"/></radialGradient></defs><circle cx="8" cy="8" r="7.6" fill="url(#hp)" stroke="#2a58b0" stroke-width="0.6"/><text x="8" y="12.5" text-anchor="middle" font-family="Liberation Sans" font-weight="bold" font-size="12" fill="#fff">?</text></svg>
<div class="abs" style="left:0;top:52px;width:179px;height:22px;background:#bfcddc"></div>
<div class="abs" style="left:0px;top:53px;font-size:11.7px;line-height:13px;white-space:nowrap">Project - VBAProject</div>
<div class="abs" style="left:158px;top:53px;width:20px;height:20px;background:#f0f0f0;border-top:1px solid #fff;border-left:1px solid #fff;border-right:2px solid #6a6a6a;border-bottom:2px solid #6a6a6a"></div>
<svg class="abs" style="left:162px;top:57px" width="11" height="11"><path d="M1,1 L10,10 M10,1 L1,10" stroke="#000" stroke-width="2.1"/></svg>
<div class="abs" style="left:0;top:74px;width:179px;height:28px;background:#f0f0f0"></div>
<div class="abs" style="left:2px;top:75px;width:170px;height:25px;background:linear-gradient(#fcfcfc,#ececec);border-radius:3px 0 0 3px"></div>
<div class="abs" style="left:167px;top:76px;width:12px;height:24px;background:linear-gradient(90deg,#b4b4b4,#a4a4a4);border-radius:5px 0 0 5px"></div>
<div class="abs" style="left:171px;top:91px;width:6px;height:1px;background:#000"></div>
<svg class="abs" style="left:171px;top:93px" width="6" height="4"><path d="M0,0 H6 L3,3z" fill="#000"/></svg>
<svg class="abs" style="left:8px;top:82px" width="15" height="12" viewBox="0 0 15 12" ><rect x="0.5" y="0.5" width="13" height="11" fill="#f4f8ff" stroke="#2050a0"/><rect x="1" y="1" width="12" height="2" fill="#5a86d8"/><path d="M3,5.5 H6 M3,7.5 H6 M3,9.5 H6" stroke="#5070a0"/><path d="M7,5.5 H11 M7,7.5 H11 M7,9.5 H11" stroke="#f06030"/></svg>
<svg class="abs" style="left:30px;top:82px" width="15" height="12" viewBox="0 0 15 12" ><rect x="0.5" y="0.5" width="13" height="11" fill="#f0f0f0" stroke="#b8b8b8"/><rect x="1" y="1" width="12" height="2" fill="#d4d4d4"/><path d="M2,5.5 H5 M2,8.5 H5" stroke="#b0b0b0"/><rect x="6.5" y="4.5" width="5" height="2" fill="none" stroke="#b0b0b0"/><rect x="6.5" y="7.5" width="5" height="2" fill="none" stroke="#b0b0b0"/></svg>
<div class="abs" style="left:52px;top:81px;width:1px;height:14px;background:#a8a8a8;box-shadow:1px 0 0 #fff"></div>
<div class="abs" style="left:56px;top:77px;width:23px;height:22px;background:#e5f1fb;border:1px solid #3399ff"></div>
<svg class="abs" style="left:59px;top:82px" width="15" height="12" viewBox="0 0 15 12" ><defs><linearGradient id="fd" x1="0" y1="0" x2="0" y2="1"><stop offset="0" stop-color="#fff2b0"/><stop offset="1" stop-color="#e0a820"/></linearGradient></defs><path d="M0.5,1.5 H5 L6,2.5 H13.5 V11.5 H0.5z" fill="url(#fd)" stroke="#7a5a10"/><path d="M1,3.5 H13" stroke="#fff8d0"/></svg>
<div class="abs" style="left:0;top:102px;width:179px;height:1px;background:#808080"></div>
<div class="abs" style="left:0;top:103px;width:179px;height:1px;background:#696969"></div>
<div class="abs" style="left:0;top:104px;width:2px;height:548px;background:#696969"></div>
<div class="abs" style="left:2px;top:104px;width:175px;height:548px;background:#fff"></div>
<div class="abs" style="left:177px;top:104px;width:1px;height:548px;background:#e3e3e3"></div>
<div class="abs" style="left:178px;top:104px;width:1px;height:548px;background:#fff"></div>
<div class="abs" style="left:179px;top:52px;width:6px;height:600px;background:#f0f0f0"></div>
<div class="abs" style="left:2px;top:104px;width:175px;height:548px;overflow:hidden"><div class="abs" style="left:-2px;top:-104px;width:814px;height:652px">
<div class="dv" style="left:9px;top:118px;height:120px"></div>
<div class="dv" style="left:28px;top:134px;height:90px"></div>
<div class="dv" style="left:28px;top:250px;height:56px"></div>
<div class="dv" style="left:47px;top:152px;height:58px"></div>
<div class="dv" style="left:47px;top:264px;height:26px"></div>
<div class="dv" style="left:47px;top:312px;height:10px"></div>
<div class="dh" style="left:14px;top:113px;width:6px"></div>
<div class="box plus" style="left:5px;top:109px"></div>
<svg class="ico" style="left:20px;top:105px" width="16" height="16"><use href="#i-proj"/></svg>
<div class="tr tb" style="left:41px;top:107px">VBAProject (Articles.xlsx)</div>
<div class="dh" style="left:14px;top:129px;width:6px"></div>
<div class="box" style="left:5px;top:125px"></div>
<svg class="ico" style="left:20px;top:121px" width="16" height="16"><use href="#i-proj"/></svg>
<div class="tr tb" style="left:41px;top:123px">VBAProject (Excel Automation.xlsm)</div>
<div class="dh" style="left:33px;top:145px;width:7px"></div>
<div class="box" style="left:24px;top:141px"></div>
<svg class="ico" style="left:40px;top:137px" width="16" height="16"><use href="#i-fopen"/></svg>
<div class="tr" style="left:59px;top:139px">Microsoft Excel Objects</div>
<div class="dh" style="left:48px;top:161px;width:11px"></div>
<svg class="ico" style="left:59px;top:153px" width="16" height="16"><use href="#i-sheet"/></svg>
<div class="tr" style="left:79px;top:155px">Sheet2 (Sheet2)</div>
<div class="dh" style="left:48px;top:177px;width:11px"></div>
<svg class="ico" style="left:59px;top:169px" width="16" height="16"><use href="#i-sheet"/></svg>
<div class="tr" style="left:79px;top:171px">Sheet3 (Example #1)</div>
<div class="dh" style="left:48px;top:193px;width:11px"></div>
<svg class="ico" style="left:59px;top:185px" width="16" height="16"><use href="#i-sheet"/></svg>
<div class="tr" style="left:79px;top:187px">Sheet4 (Example #2)</div>
<div class="dh" style="left:48px;top:209px;width:11px"></div>
<svg class="ico" style="left:58px;top:201px" width="16" height="16"><use href="#i-wb"/></svg>
<div class="tr" style="left:79px;top:203px">ThisWorkbook</div>
<div class="dh" style="left:33px;top:225px;width:7px"></div>
<div class="box plus" style="left:24px;top:221px"></div>
<svg class="ico" style="left:40px;top:217px" width="16" height="16"><use href="#i-fclosed"/></svg>
<div class="tr" style="left:59px;top:219px">Modules</div>
<div class="dh" style="left:14px;top:241px;width:6px"></div>
<div class="box" style="left:5px;top:237px"></div>
<svg class="ico" style="left:20px;top:233px" width="16" height="16"><use href="#i-proj"/></svg>
<div class="tr tb" style="left:41px;top:235px">VBAProject (PERSONAL.XLSB)</div>
<div class="dh" style="left:33px;top:257px;width:7px"></div>
<div class="box" style="left:24px;top:253px"></div>
<svg class="ico" style="left:40px;top:249px" width="16" height="16"><use href="#i-fopen"/></svg>
<div class="tr" style="left:59px;top:251px">Microsoft Excel Objects</div>
<div class="dh" style="left:48px;top:273px;width:11px"></div>
<svg class="ico" style="left:59px;top:265px" width="16" height="16"><use href="#i-sheet"/></svg>
<div class="tr" style="left:79px;top:267px">Sheet1 (Sheet1)</div>
<div class="dh" style="left:48px;top:289px;width:11px"></div>
<svg class="ico" style="left:58px;top:281px" width="16" height="16"><use href="#i-wb"/></svg>
<div class="tr" style="left:79px;top:283px">ThisWorkbook</div>
<div class="dh" style="left:33px;top:305px;width:7px"></div>
<div class="box" style="left:24px;top:301px"></div>
<svg class="ico" style="left:40px;top:297px" width="16" height="16"><use href="#i-fopen"/></svg>
<div class="tr" style="left:59px;top:299px">Modules</div>
<div class="dh" style="left:48px;top:321px;width:11px"></div>
<svg class="ico" style="left:56px;top:311px" width="18" height="16"><use href="#i-mod"/></svg>
<div class="abs" style="left:77px;top:313px;width:44px;height:16px;background:#ececec"></div>
<div class="tr" style="left:79px;top:315px">Module1</div>
</div></div>
<div class="abs" style="left:185px;top:52px;width:629px;height:2px;background:#696969"></div>
<div class="abs" style="left:185px;top:52px;width:2px;height:600px;background:#696969"></div>
<div class="abs" style="left:187px;top:54px;width:627px;height:3px;background:#b9d1ea"></div>
<div class="abs" style="left:187px;top:57px;width:627px;height:26px;background:#f0f0f0"></div>
<div class="combo" style="left:191px;top:59px;width:551px"><span>(General)</span></div>
<div class="abs" style="left:724px;top:61px;width:17px;height:18px;background:#f0f0f0;border-top:1px solid #fff;border-left:1px solid #fff;border-right:1px solid #696969;border-bottom:1px solid #696969;box-shadow:inset -1px -1px 0 #a0a0a0"></div>
<svg class="abs" style="left:729px;top:68px" width="7" height="4"><path d="M0,0 H7 L3.5,4z" fill="#000"/></svg>
<div class="combo" style="left:753px;top:59px;width:70px"><span>Macro2</span></div>
<div class="abs" style="left:187px;top:83px;width:627px;height:2px;background:#696969"></div>
<div class="abs" style="left:187px;top:85px;width:627px;height:567px;background:#fff"></div>
<div class="abs" style="left:187px;top:85px;width:16px;height:567px;background:#f0f0f0"></div>
<div class="abs" style="left:203px;top:85px;width:1px;height:567px;background:#000"></div>
<div class="abs" style="left:204px;top:199px;width:610px;height:1px;background:#808080"></div>
<div class="abs" style="left:222px;top:136px;width:1px;height:15px;background:#000"></div>
<div id="lines" class="abs"><span class="k">Sub</span> Macro2()
<span class="c">'</span>
<span class="c">' Macro2 Macro</span>
<span class="c">'</span>
<span class="c">'</span>
    Range("G2").Select
<span class="k">End Sub</span>
<span class="k">Sub</span> Marks_Macro1()
<span class="c">'</span>
<span class="c">' Marks_Macro1 Macro</span>
<span class="c">'</span>
<span class="c">'</span>
    Range("G2").Select
    ActiveCell.FormulaR1C1 = "=SUM(RC[-5]:RC[-1])"
    Range("G2").Select
    Selection.AutoFill Destination:=Range("G2:G11"), Type:=xlFillDefault
    Range("G2:G11").Select
    Range("H2").Select
    ActiveCell.FormulaR1C1 = "=AVERAGE(RC[-6]:RC[-2])"
    Range("H2").Select
    Selection.AutoFill Destination:=Range("H2:H11"), Type:=xlFillDefault
    Range("H2:H11").Select
    Range("I2").Select
    Application.CutCopyMode = <span class="k">False</span>
    ActiveCell.FormulaR1C1 = "=MIN(RC[-7]:RC[-3])"
    Range("I2").Select
    Selection.AutoFill Destination:=Range("I2:I11"), Type:=xlFillDefault
    Range("I2:I11").Select
    Range("J2").Select
    ActiveCell.FormulaR1C1 = "=MAX(RC[-8]:RC[-4])"
    Range("J2").Select
    Selection.AutoFill Destination:=Range("J2:J11"), Type:=xlFillDefault
    Range("J2:J11").Select
    Range("L12").Select
<span class="k">End Sub</span></div>
</body></html>
